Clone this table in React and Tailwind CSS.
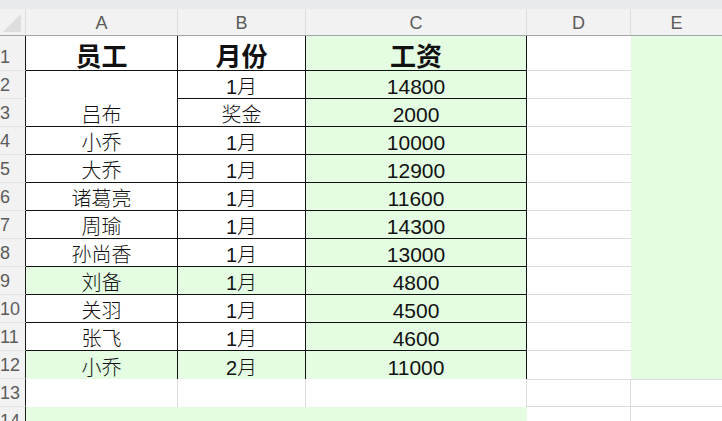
import React from 'react';

const rows = [
  { n: 1, a: '员工', b: '月份', c: '工资', head: true },
  { n: 2, a: '吕布', b: '1月', c: '14800', merge: true },
  { n: 3, b: '奖金', c: '2000', skipA: true },
  { n: 4, a: '小乔', b: '1月', c: '10000' },
  { n: 5, a: '大乔', b: '1月', c: '12900' },
  { n: 6, a: '诸葛亮', b: '1月', c: '11600' },
  { n: 7, a: '周瑜', b: '1月', c: '14300' },
  { n: 8, a: '孙尚香', b: '1月', c: '13000' },
  { n: 9, a: '刘备', b: '1月', c: '4800', green: true },
  { n: 10, a: '关羽', b: '1月', c: '4500' },
  { n: 11, a: '张飞', b: '1月', c: '4600' },
  { n: 12, a: '小乔', b: '2月', c: '11000', green: true, last: true },
];

const font = { fontFamily: '"Liberation Sans", "Noto Sans CJK SC", sans-serif' };

const RowNum = ({ n }) => (
  <div className="flex items-end bg-[#f2f2f2] border-r border-r-[#1a1a1a] border-b border-b-[#e2e2e2] text-[18px] leading-none text-[#5c5c5c] pb-[4px]">
    {n}
  </div>
);

const Cell = ({ children, className = '', head, num }) => (
  <div
    className={`flex items-end justify-center text-[#111] leading-none ${
      head ? 'text-[26px] font-bold' : num ? 'text-[21px] pb-[1px]' : 'text-[20px] font-light pb-[1px]'
    } ${className}`}
  >
    <span>{children}</span>
  </div>
);

export default function App() {
  return (
    <div className="w-[722px] h-[421px] overflow-hidden bg-white flex flex-col" style={font}>
      {/* top strip */}
      <div className="h-[9px] shrink-0 bg-[#e8eaed]" />

      {/* column headers */}
      <div className="h-[27px] shrink-0 grid grid-cols-[26px_152px_128px_221px_104px_1fr] bg-[#f2f2f2] border-b border-[#a6a6a6] text-[18px] font-light text-[#5c5c5c] leading-none">
        <div className="relative border-r border-[#dcdcdc]">
          <div className="absolute right-[4px] bottom-[3px] w-0 h-0 border-l-[18px] border-l-transparent border-b-[18px] border-b-[#dedede]" />
        </div>
        {['A', 'B', 'C', 'D', 'E'].map((l, i) => (
          <div key={l} className={`flex items-end justify-center pb-[3px] ${i < 4 ? 'border-r border-[#dcdcdc]' : ''}`}>
            {l}
          </div>
        ))}
      </div>

      {/* sheet body */}
      <div className="shrink-0 grid grid-cols-[26px_152px_128px_221px_104px_1fr] grid-rows-[35px_repeat(12,28px)_28px]">
        {rows.map((r) => {
          const bb = r.last ? '' : 'border-b border-b-[#111]';
          const ab = r.green ? 'bg-[#e4fce2]' : 'bg-white';
          return (
            <React.Fragment key={r.n}>
              <RowNum n={r.n} />
              {!r.skipA && (
                <Cell head={r.head} className={`${ab} border-r border-r-[#111] ${bb} ${r.merge ? 'row-span-2' : ''}`}>
                  {r.a}
                </Cell>
              )}
              <Cell head={r.head} className={`${ab} border-r border-r-[#111] ${bb}`}>{r.b}</Cell>
              <Cell head={r.head} num className={`bg-[#e4fce2] border-r border-r-[#111] ${bb}`}>{r.c}</Cell>
              <div className={`bg-white ${r.last ? '' : 'border-b border-b-[#dcdcdc]'}`} />
              <div className="bg-[#e4fce2]" />
            </React.Fragment>
          );
        })}

        {/* row 13 */}
        <RowNum n={13} />
        <div className="bg-white border-r border-r-[#dcdcdc]" />
        <div className="bg-white border-r border-r-[#dcdcdc]" />
        <div className="bg-white border-r border-r-[#dcdcdc]" />
        <div className="bg-white border-t border-t-[#dcdcdc] border-b border-b-[#dcdcdc] border-r border-r-[#dcdcdc]" />
        <div className="bg-white border-t border-t-[#dcdcdc] border-b border-b-[#dcdcdc]" />

        {/* row 14 */}
        <RowNum n={14} />
        <div className="col-span-3 bg-[#e4fce2]" />
        <div className="bg-white border-r border-r-[#dcdcdc]" />
        <div className="bg-white" />
      </div>
    </div>
  );
}
